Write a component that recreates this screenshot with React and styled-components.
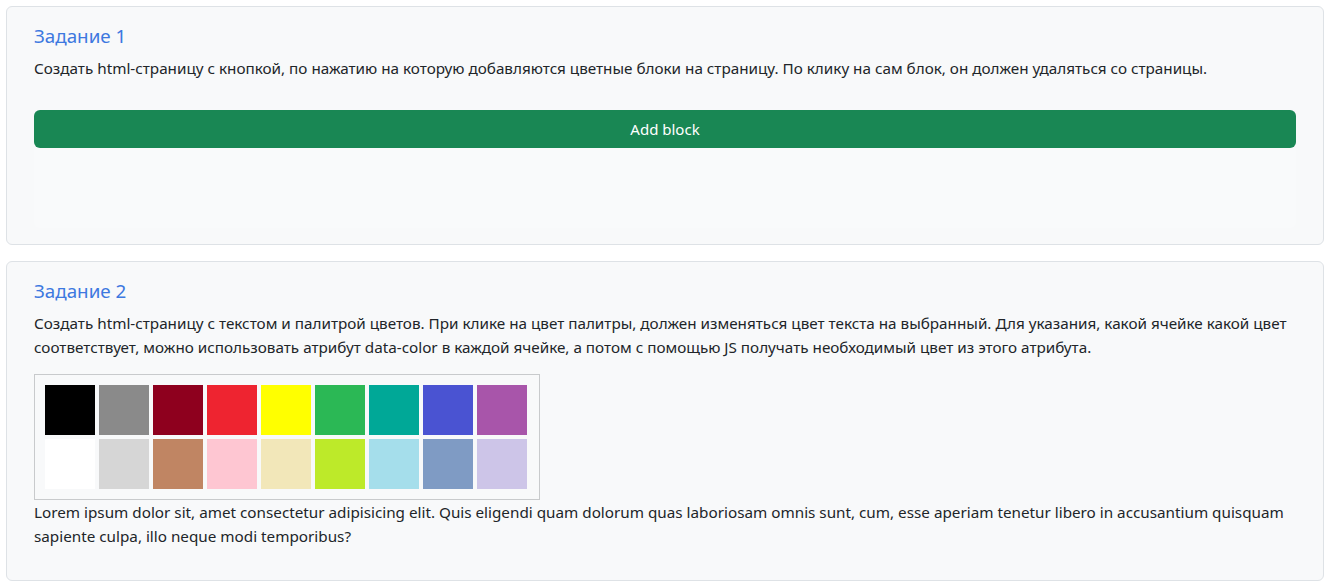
import React from 'react';
import styled, { createGlobalStyle } from 'styled-components';

const GlobalStyle = createGlobalStyle`
  body {
    margin: 0;
    background: #fff;
    font-family: "Noto Sans", "Open Sans", sans-serif;
    color: #212529;
  }
`

const Page = styled.div`
  display: flex;
  flex-direction: column;
  gap: 16px;
  padding: 6px 3px 6px 6px;
`

const Card = styled.section`
  background-color: #f8f9fa;
  border: 1px solid #dee2e6;
  border-radius: 6px;
  padding: 17px 27px ${props => props.bottom || 16}px;
`

const Title = styled.h2`
  margin: 0 0 8px;
  font-size: 18.8px;
  line-height: 24px;
  font-weight: 400;
  color: #3d78e0;
`

const Text = styled.p`
  margin: 0 0 ${props => props.after || 0}px;
  font-size: 15.25px;
  line-height: 24px;
`

const AddButton = styled.button`
  display: block;
  width: 100%;
  height: 38px;
  border: none;
  border-radius: 6px;
  background-color: #198754;
  color: #fff;
  font-family: inherit;
  font-size: 15px;
  padding: 0 0 1px;
  cursor: pointer;
`

const BlocksArea = styled.div`
  height: 80px;
  border-radius: 0 0 6px 6px;
  background-color: #f9fafb;
`

const Palette = styled.table`
  border: 1px solid #c8cacc;
  border-spacing: 4px;
  padding: 6px 8px 6px 6px;
  margin: 15px 0 0;
`

const Swatch = styled.td`
  width: 50px;
  height: 50px;
  padding: 0;
  background-color: ${props => props.color};
  cursor: pointer;
`

const rows = [
  ['#000000', '#8a8a8a', '#8e001e', '#ee2430', '#ffff00', '#2bb855', '#00a897', '#4a53d2', '#a855aa'],
  ['#ffffff', '#d6d6d6', '#c08563', '#fec6d2', '#f2e7b9', '#bdea29', '#a5deeb', '#7f9bc4', '#cdc5e8'],
]

const App = () => (
  <Page>
    <GlobalStyle />
    <Card bottom={16}>
      <Title>Задание 1</Title>
      <Text after={30}>
        Создать html-страницу с кнопкой, по нажатию на которую добавляются цветные блоки на страницу. По клику на сам блок, он должен удаляться со страницы.
      </Text>
      <AddButton>Add block</AddButton>
      <BlocksArea />
    </Card>
    <Card bottom={32}>
      <Title>Задание 2</Title>
      <Text>
        Создать html-страницу с текстом и палитрой цветов. При клике на цвет палитры, должен изменяться цвет текста на выбранный. Для указания, какой ячейке какой цвет соответствует, можно использовать атрибут data-color в каждой ячейке, а потом с помощью JS получать необходимый цвет из этого атрибута.
      </Text>
      <Palette>
        <tbody>
          {rows.map((row, i) => (
            <tr key={i}>
              {row.map(c => <Swatch key={c} color={c} data-color={c} />)}
            </tr>
          ))}
        </tbody>
      </Palette>
      <Text>
        Lorem ipsum dolor sit, amet consectetur adipisicing elit. Quis eligendi quam dolorum quas laboriosam omnis sunt, cum, esse aperiam tenetur libero in accusantium quisquam sapiente culpa, illo neque modi temporibus?
      </Text>
    </Card>
  </Page>
);

export default App;
